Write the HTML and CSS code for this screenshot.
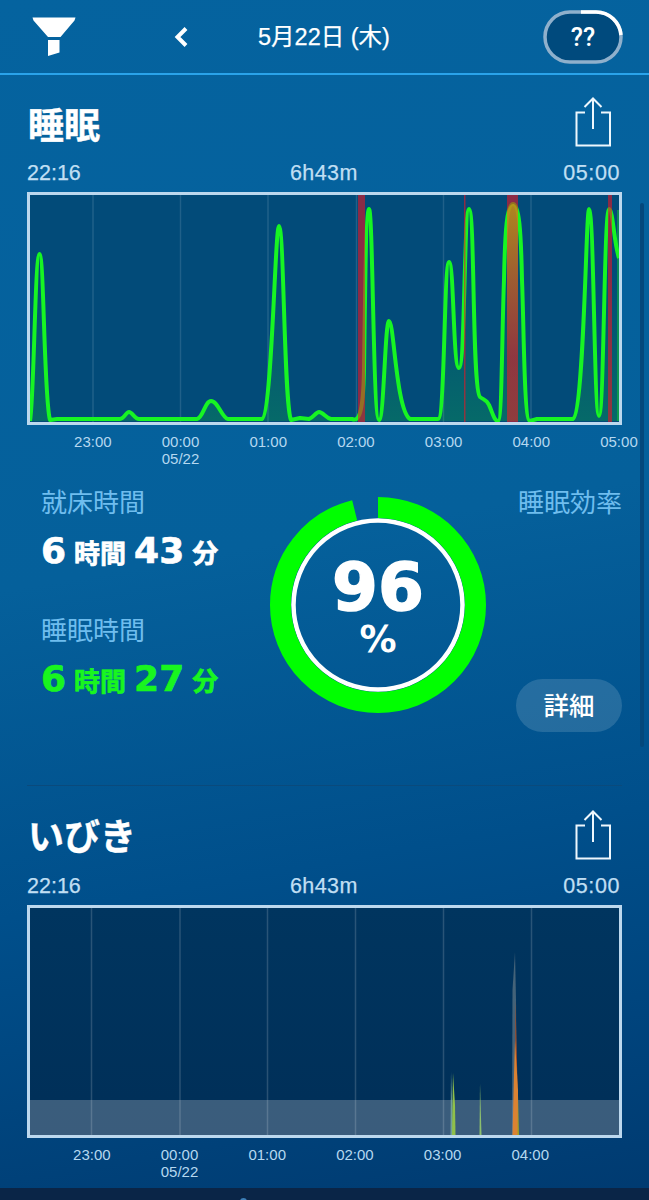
FILE: index.html
```html
<!DOCTYPE html>
<html lang="ja">
<head>
    <meta charset="UTF-8">
    <meta name="viewport" content="width=device-width, initial-scale=1.0">
    <title>睡眠</title>
    <link rel="stylesheet" href="styles.css">
</head>
<body>
    <header class="topbar">
        <svg class="filter-icon" width="44" height="40" viewBox="0 0 44 40">
            <path d="M0.5 0.5H43.5L42.5 3.500L28.500 20H16L1.500 3.500Z M16 23H27.500V35.500L16 39Z" fill="#fff"/>
        </svg>
        <svg class="back-icon" width="16" height="22" viewBox="0 0 16 22">
            <path d="M13 2.500L4.500 11L13 19.500" fill="none" stroke="#fff" stroke-width="4"/>
        </svg>
        <div class="date">5月22日 (木)</div>
        <svg class="score-pill" width="80" height="54" viewBox="0 0 80 54">
            <rect x="2" y="2" width="76" height="50" rx="25" fill="#004a7d" stroke="#8fb0cc" stroke-width="3.500"/>
            <path d="M38 2H53A25 25 0 0 1 78 25" fill="none" stroke="#fff" stroke-width="3.500"/>
            <text x="40" y="36" text-anchor="middle" class="score-text">??</text>
        </svg>
    </header>

    <div class="scroll-thumb"></div>

    <section class="panel">
        <div class="panel-head">
            <h2>睡眠</h2>
            <svg class="share-icon" width="36" height="50" viewBox="0 0 36 50">
                <path d="M10 15.500H1.500V48.500H35V15.500H26 M18 32V2 M9.500 10L18 1.500L26.500 10" fill="none" stroke="#eef7fd" stroke-width="2"/>
            </svg>
        </div>
        <div class="time-row"><span>22:16</span><span class="mid">6h43m</span><span>05:00</span></div>
        <div class="chart">
            <svg width="589" height="227" viewBox="30 195 589 227">
                <defs>
                    <linearGradient id="fillGreen" x1="0" y1="0" x2="0" y2="1">
                        <stop offset="0.3" stop-color="#19ff19" stop-opacity="0"/>
                        <stop offset="1" stop-color="#19ff19" stop-opacity=".17"/>
                    </linearGradient>
                    <linearGradient id="fillGold" x1="0" y1="0" x2="0" y2="1">
                        <stop offset="0" stop-color="#b9a412" stop-opacity=".75"/>
                        <stop offset=".7" stop-color="#b9a412" stop-opacity=".05"/>
                    </linearGradient>
                </defs>
                <path class="grid-line" d="M93 195V422 M180.500 195V422 M268 195V422 M356.500 195V422 M443.500 195V422 M531 195V422"/>
                <path class="sleep-fill" fill="url(#fillGreen)" d="M30 421C34 400 35 254 39.500 254C44 254 44 400 50 420L57 419L120 419C124 419 126 412 129 412C132 412 135 419 139 419L197 419C203 418 205 401 211 401C218 401 222 418 228 419L262 419C272 416 275 226 279 226C284 226 284 405 291 420L300 418L309 419C313 418 316 412 319 412C323 412 326 418 331 419L352 419C358 421 363 418 364 370C365 300 366 209 369 209C373 209 373 420 379 420C384 420 385 321 389 321C394 321 396 410 410 419L438 419C445 419 444 262 449 262C454 262 453 368 459 368C465 368 464 209 469 209C475 209 472 390 480 397C484 400 487 400 489 405C492 411 494 421 498 421C502 421 502 330 504 280C505 230 507 204 513 204C519 204 521 230 522 280C524 330 524 421 530 421L537 419L573 419C584 414 586 209 589 209C594 209 594 416 599 416C604 416 604 209 609 209C613 209 614 244 619 258V421Z"/>
                <path class="sleep-line" d="M30 421C34 400 35 254 39.500 254C44 254 44 400 50 420L57 419L120 419C124 419 126 412 129 412C132 412 135 419 139 419L197 419C203 418 205 401 211 401C218 401 222 418 228 419L262 419C272 416 275 226 279 226C284 226 284 405 291 420L300 418L309 419C313 418 316 412 319 412C323 412 326 418 331 419L352 419C358 421 363 418 364 370C365 300 366 209 369 209C373 209 373 420 379 420C384 420 385 321 389 321C394 321 396 410 410 419L438 419C445 419 444 262 449 262C454 262 453 368 459 368C465 368 464 209 469 209C475 209 472 390 480 397C484 400 487 400 489 405C492 411 494 421 498 421C502 421 502 330 504 280C505 230 507 204 513 204C519 204 521 230 522 280C524 330 524 421 530 421L537 419L573 419C584 414 586 209 589 209C594 209 594 416 599 416C604 416 604 209 609 209C613 209 614 244 619 258"/>
                <g fill="#e81524" fill-opacity=".6">
                    <rect x="358" y="195" width="7" height="227"/>
                    <rect x="464" y="195" width="1.500" height="227"/>
                    <rect x="507" y="195" width="11" height="227"/>
                    <rect x="608" y="195" width="4" height="227"/>
                </g>
                <path d="M507 421V212C509 206 511 204 513 204C515 204 517 206 518 212V421Z" fill="url(#fillGold)"/>
                <rect x="617" y="210" width="2" height="211" fill="#19ff19" fill-opacity=".35"/>
            </svg>
        </div>
        <div class="ticks">
            <span>23:00</span>
            <span>00:00<br>05/22</span>
            <span>01:00</span>
            <span>02:00</span>
            <span>03:00</span>
            <span>04:00</span>
            <span>05:00</span>
        </div>

        <div class="summary">
            <div class="summary-left">
                <div class="label">就床時間</div>
                <div class="duration"><b>6</b><i>時間</i><b>43</b><i>分</i></div>
                <div class="label second">睡眠時間</div>
                <div class="duration green"><b>6</b><i>時間</i><b>27</b><i>分</i></div>
            </div>
            <div class="ring">
                <svg width="216" height="216" viewBox="0 0 216 216">
                    <circle cx="108" cy="108" r="84.500" fill="none" stroke="#fff" stroke-width="4.500"/>
                    <circle cx="108" cy="108" r="97.500" fill="none" stroke="#00ff00" stroke-width="21" stroke-dasharray="588 613" transform="rotate(-90 108 108)"/>
                </svg>
                <div class="ring-text">
                    <div class="pct">96</div>
                    <div class="pct-sign">%</div>
                </div>
            </div>
            <div class="summary-right">
                <div class="label">睡眠効率</div>
                <button class="detail">詳細</button>
            </div>
        </div>
    </section>

    <section class="panel snore">
        <div class="panel-head">
            <h2>いびき</h2>
            <svg class="share-icon" width="36" height="50" viewBox="0 0 36 50">
                <path d="M10 15.500H1.500V48.500H35V15.500H26 M18 32V2 M9.500 10L18 1.500L26.500 10" fill="none" stroke="#eef7fd" stroke-width="2"/>
            </svg>
        </div>
        <div class="time-row"><span>22:16</span><span class="mid">6h43m</span><span>05:00</span></div>
        <div class="chart dark">
            <svg width="589" height="227" viewBox="30 908 589 227">
                <rect x="30" y="1100" width="589" height="35" fill="#b0b8c4" fill-opacity=".33"/>
                <path class="grid-line" d="M91.500 908V1135 M180 908V1135 M267.500 908V1135 M355.500 908V1135 M443.500 908V1135 M531.500 908V1135"/>
                <path d="M450.500 1135L451 1072L452 1100L453 1135Z" fill="#7fb0a0" fill-opacity=".8"/>
                <path d="M452 1135L453 1073L455 1105L455.500 1135Z" fill="#8fc04a"/>
                <path d="M479.500 1135L480 1083L481.500 1135Z" fill="#9bd06b" fill-opacity=".85"/>
                <path d="M512 1135L512.500 990L515 952L516 1000L517 1135Z" fill="#7c8a90" fill-opacity=".55"/>
                <path d="M515.500 1000L517.500 1085L515 1100Z" fill="#a8481f"/>
                <path d="M512.500 1135L514 1075L515 1040L518 1090V1135Z" fill="#db8232"/>
                <path d="M517.500 1135L518 1095L519 1135Z" fill="#a0a020"/>
            </svg>
        </div>
        <div class="ticks snore-ticks">
            <span>23:00</span>
            <span>00:00<br>05/22</span>
            <span>01:00</span>
            <span>02:00</span>
            <span>03:00</span>
            <span>04:00</span>
        </div>
    </section>

    <footer class="tabbar"><span class="tab-dot"></span></footer>
</body>
</html>
```

FILE: styles.css
```css
* {
    box-sizing: border-box;
}
html, body {
    margin: 0;
    height: 1200px;
    overflow: hidden;
}
body {
    position: relative;
    width: 649px;
    font-family: "Liberation Sans", "Noto Sans CJK JP", sans-serif;
    color: #fff;
    background: linear-gradient(170deg, #05639f 0%, #05609b 45%, #004f8b 70%, #003a70 100%);
}
.topbar {
    height: 75px;
    border-bottom: 2.500px solid #2aa3ea;
    position: relative;
    display: flex;
    align-items: flex-start;
    padding: 16px 26px 0 32px;
}
.filter-icon {
    margin-top: 1px;
}
.back-icon {
    margin: 10px 0 0 97px;
}
.date {
    flex: 1;
    text-align: center;
    font-size: 23.500px;
    line-height: 42px;
    padding-right: 84px;
    -webkit-text-stroke: .25px #fff;
}
.score-pill {
    margin-top: -6px;
}
.score-text {
    font: 500 25px Roboto, sans-serif;
    fill: #fff;
}
.scroll-thumb {
    position: absolute;
    left: 640px;
    top: 203px;
    width: 4px;
    height: 544px;
    border-radius: 2px;
    background: #04487c;
}
.panel {
    padding: 0 27px;
}
.panel-head {
    height: 72px;
    display: flex;
    justify-content: space-between;
    align-items: flex-end;
    padding-right: 11px;
}
.panel-head h2 {
    margin: 0 0 -6px 1px;
    font-size: 36px;
    line-height: 52px;
    font-weight: 700;
    -webkit-text-stroke: .4px #fff;
}
.time-row {
    display: flex;
    justify-content: space-between;
    height: 45px;
    padding: 7px 2px 0 0;
    align-items: center;
    font-size: 21.500px;
    color: #c0dff3;
    position: relative;
    -webkit-text-stroke: .25px #c0dff3;
}
.time-row span:last-child {
    letter-spacing: .6px;
}
.time-row .mid {
    position: absolute;
    left: 263px;
    letter-spacing: .4px;
}
.chart {
    width: 595px;
    height: 233px;
    border: 3px solid #bcd8ee;
    background: #024b79;
    line-height: 0;
}
.chart.dark {
    background: linear-gradient(#00355f, #002f58);
}
.grid-line {
    stroke: #fff;
    stroke-opacity: .12;
    stroke-width: 1.500;
    fill: none;
}
.sleep-line {
    fill: none;
    stroke: #17f523;
    stroke-width: 4;
    stroke-linejoin: round;
}
.ticks {
    display: grid;
    grid-template-columns: repeat(7, 87.700px);
    padding-left: 22px;
    height: 50px;
    font-size: 15px;
    line-height: 17px;
    color: #b5d8f0;
    text-align: center;
    padding-top: 8px;
}
.summary {
    display: flex;
    height: 310px;
    padding-top: 22px;
}
.summary-left {
    width: 243px;
    margin-top: -12px;
    padding-left: 14px;
}
.label {
    font-size: 26px;
    line-height: 37px;
    color: #6fbdee;
}
.label.second {
    margin-top: 33px;
}
.duration {
    display: flex;
    align-items: baseline;
    height: 56px;
    margin-top: 2px;
    white-space: nowrap;
    -webkit-text-stroke: .7px currentColor;
}
.duration b {
    font: bold 36px/54px "DejaVu Sans", sans-serif;
}
.duration i {
    font: normal bold 26px/54px "Noto Sans CJK JP", sans-serif;
    margin: 0 8px;
}
.duration.green {
    color: #19f51f;
}
.ring {
    position: relative;
    width: 216px;
    height: 216px;
}
.ring svg {
    display: block;
}
.ring-text {
    position: absolute;
    top: 0;
    left: 0;
    width: 100%;
    text-align: center;
}
.pct {
    font: bold 66px/60px "DejaVu Sans", sans-serif;
    -webkit-text-stroke: 1.500px #fff;
    padding-top: 61px;
}
.pct-sign {
    font: bold 37px/40px "DejaVu Sans", sans-serif;
    margin-top: 2px;
}
.summary-right {
    flex: 1;
    display: flex;
    flex-direction: column;
    align-items: flex-end;
    margin-top: -12px;
}
.detail {
    margin-top: 157px;
    width: 106px;
    height: 53px;
    padding: 0 0 4px;
    border: none;
    border-radius: 27px;
    background: rgba(255, 255, 255, .14);
    color: #fff;
    font: 500 25.500px "Noto Sans CJK JP", sans-serif;
}
.snore .panel-head {
    height: 75px;
    border-top: 1px solid #0a4a7c;
}
.snore .panel-head h2 {
    margin-bottom: -4px;
}
.snore .grid-line {
    stroke-opacity: .16;
}
.snore-ticks {
    padding-left: 21px;
}
.tabbar {
    position: absolute;
    left: 0;
    right: 0;
    bottom: 0;
    height: 12px;
    overflow: hidden;
    background: #0a2547;
}
.tab-dot {
    position: absolute;
    left: 240px;
    top: 10px;
    width: 7px;
    height: 7px;
    border-radius: 50%;
    background: #3d7fb8;
}
```
